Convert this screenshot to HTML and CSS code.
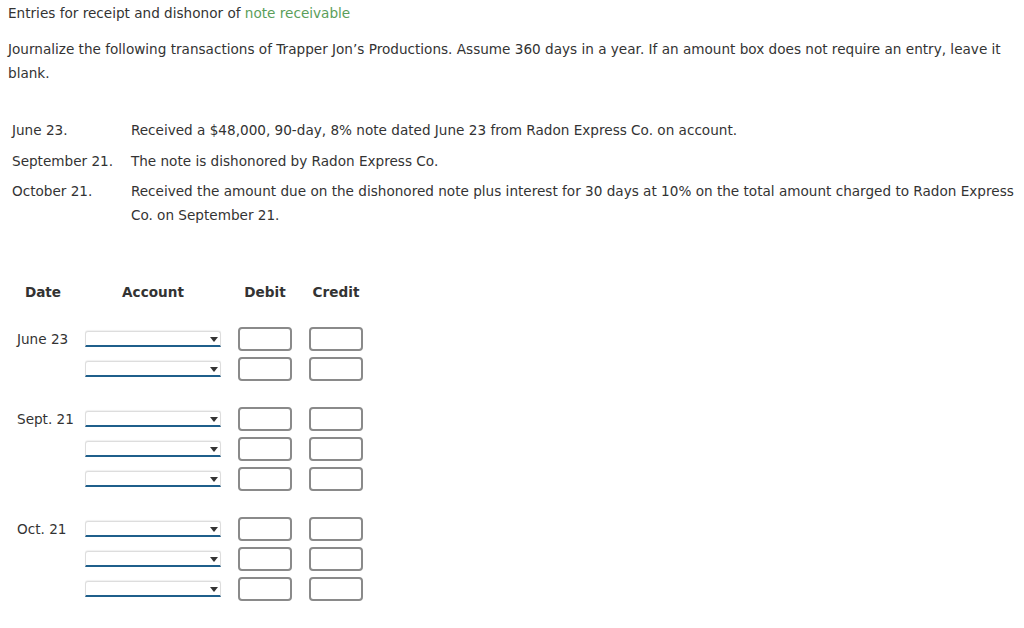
FILE: index.html
```html
<!DOCTYPE html>
<html>
<head>
<meta charset="utf-8">
<link rel="stylesheet" href="styles.css">
</head>
<body>
<div class="title">Entries for receipt and dishonor of <span class="term">note receivable</span></div>
<p class="intro">Journalize the following transactions of Trapper Jon’s Productions. Assume 360 days in a year. If an amount box does not require an entry, leave it blank.</p>

<table class="tx">
  <tr><td class="txdate">June 23.</td><td class="txdesc">Received a $48,000, 90-day, 8% note dated June 23 from Radon Express Co. on account.</td></tr>
  <tr><td class="txdate">September 21.</td><td class="txdesc">The note is dishonored by Radon Express Co.</td></tr>
  <tr><td class="txdate">October 21.</td><td class="txdesc">Received the amount due on the dishonored note plus interest for 30 days at 10% on the total amount charged to Radon Express Co. on September 21.</td></tr>
</table>

<div class="journal">
  <div class="head">
    <div class="h-date">Date</div>
    <div class="h-acct">Account</div>
    <div class="h-amt">Debit</div>
    <div class="h-amt">Credit</div>
  </div>

  <div class="group">
    <div class="row"><div class="date">June 23</div><div class="select"></div><div class="amt"></div><div class="amt"></div></div>
    <div class="row"><div class="date"></div><div class="select"></div><div class="amt"></div><div class="amt"></div></div>
  </div>

  <div class="group">
    <div class="row"><div class="date">Sept. 21</div><div class="select"></div><div class="amt"></div><div class="amt"></div></div>
    <div class="row"><div class="date"></div><div class="select"></div><div class="amt"></div><div class="amt"></div></div>
    <div class="row"><div class="date"></div><div class="select"></div><div class="amt"></div><div class="amt"></div></div>
  </div>

  <div class="group">
    <div class="row"><div class="date">Oct. 21</div><div class="select"></div><div class="amt"></div><div class="amt"></div></div>
    <div class="row"><div class="date"></div><div class="select"></div><div class="amt"></div><div class="amt"></div></div>
    <div class="row"><div class="date"></div><div class="select"></div><div class="amt"></div><div class="amt"></div></div>
  </div>
</div>
</body>
</html>
```

FILE: styles.css
```css
html, body {
  background: #ffffff;
}
body {
  margin: 0;
  padding: 4px 8px 0 8px;
  font-family: "DejaVu Sans", Verdana, sans-serif;
  font-size: 13.6px;
  color: #333333;
}
.title {
  line-height: 18px;
}
.term {
  color: #5a9e5a;
}
.intro {
  margin: 15px 0 0 0;
  line-height: 24px;
  width: 1008px;
}
.tx {
  border-collapse: collapse;
  margin: 33px 0 0 0;
}
.tx td {
  padding: 0 0 6.5px 0;
  line-height: 24px;
  vertical-align: top;
}
.txdate {
  padding-left: 4px !important;
  width: 119px;
  white-space: nowrap;
}
.txdesc {
  width: 890px;
}
.journal {
  margin-top: 49px;
}
.head {
  display: flex;
  font-weight: bold;
  line-height: 18px;
  margin-bottom: 23px;
}
.h-date {
  width: 70px;
  text-align: center;
}
.h-acct {
  width: 136px;
  margin-left: 7px;
  text-align: center;
}
.h-amt {
  width: 54px;
  margin-left: 17px;
  text-align: center;
}
.group {
  margin-bottom: 20px;
}
.row {
  display: flex;
  align-items: center;
  height: 30px;
}
.date {
  width: 77px;
  box-sizing: border-box;
  padding-left: 9px;
  white-space: nowrap;
}
.select {
  position: relative;
  width: 136px;
  height: 16px;
  box-sizing: border-box;
  border: 1px solid #dddddd;
  border-bottom: 2px solid #1f5f8b;
  border-radius: 3px 3px 0 0;
  background: #ffffff;
  box-shadow: 0 -1px 1px rgba(0, 0, 0, 0.06);
}
.select::after {
  content: "";
  position: absolute;
  right: 2px;
  top: 5px;
  border-left: 4px solid transparent;
  border-right: 4px solid transparent;
  border-top: 5px solid #333333;
}
.amt {
  width: 54px;
  height: 24px;
  margin-left: 17px;
  box-sizing: border-box;
  border: 2px solid #8a8a8a;
  border-radius: 4px;
  background: #ffffff;
}
```
